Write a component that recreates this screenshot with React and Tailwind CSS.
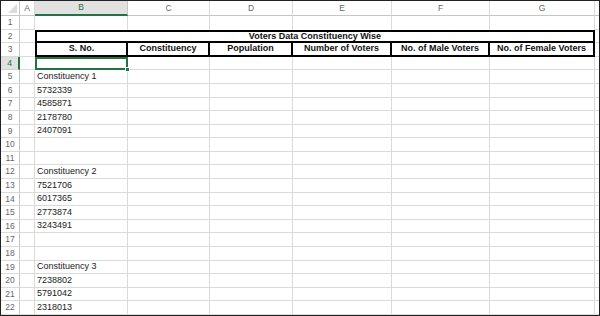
const COLS = ['A', 'B', 'C', 'D', 'E', 'F', 'G']
const HEADERS = ['S. No.', 'Constituency', 'Population', 'Number of Voters', 'No. of Male Voters', 'No. of Female Voters']

const DATA = {
  5: 'Constituency 1',
  6: '5732339',
  7: '4585871',
  8: '2178780',
  9: '2407091',
  12: 'Constituency 2',
  13: '7521706',
  14: '6017365',
  15: '2773874',
  16: '3243491',
  19: 'Constituency 3',
  20: '7238802',
  21: '5791042',
  22: '2318013',
}

const ROWS = Array.from({ length: 22 }, (_, i) => i + 1)

function RowNum({ n }) {
  const active = n === 4
  return (
    <div
      className={`flex items-center justify-center border-b text-[8.5px] ${
        active
          ? 'bg-[#e1e1e1] text-[#217346] border-b-[#d4d4d4] border-r-2 border-r-[#217346]'
          : 'bg-white text-[#666] border-b-[#dadada] border-r border-r-[#c6c6c6]'
      }`}
    >
      {n}
    </div>
  )
}

function Cell({ children, className = '' }) {
  return (
    <div className={`flex items-center overflow-visible whitespace-nowrap px-[2px] ${className}`}>
      {children}
    </div>
  )
}

function SheetRow({ n }) {
  if (n === 2) {
    return (
      <>
        <RowNum n={n} />
        <Cell className="border-b border-b-[#dadada]" />
        <div className="col-span-6 flex items-center justify-center border-2 border-black font-bold text-[9px] text-[#111]">
          Voters Data Constituency Wise
        </div>
        <Cell className="border-b border-b-[#dadada]" />
      </>
    )
  }
  if (n === 3) {
    return (
      <>
        <RowNum n={n} />
        <Cell className="border-b border-b-[#dadada]" />
        {HEADERS.map((h, i) => (
          <div
            key={h}
            className={`flex items-center justify-center whitespace-nowrap border-b-2 border-r-2 border-black font-bold text-[9px] text-[#111] ${
              i === 0 ? 'border-l-2' : ''
            }`}
          >
            {h}
          </div>
        ))}
        <Cell className="border-b border-b-[#dadada]" />
      </>
    )
  }
  return (
    <>
      <RowNum n={n} />
      <Cell className={`border-b border-b-[#dadada] ${n === 4 ? '' : 'border-r border-r-[#dadada]'}`} />
      {n === 4 ? (
        <div className="relative border-2 border-[#217346]">
          <div className="absolute -right-[4px] -bottom-[4px] h-[5px] w-[5px] bg-[#217346] border border-white" />
        </div>
      ) : (
        <Cell className={`border-r border-r-[#dadada] text-[9px] text-[#1a1a1a] ${n === 1 ? '' : 'border-b border-b-[#dadada]'}`}>
          {DATA[n]}
        </Cell>
      )}
      {[0, 1, 2, 3, 4].map(i => (
        <Cell
          key={i}
          className={`border-r border-r-[#dadada] ${n === 1 ? '' : 'border-b border-b-[#dadada]'}`}
        />
      ))}
      <Cell className="border-b border-b-[#dadada]" />
    </>
  )
}

export default function App() {
  return (
    <div
      className="h-[316px] w-[600px] overflow-hidden border border-[#222] bg-white"
      style={{ fontFamily: '"Liberation Sans", Arial, sans-serif' }}
    >
      <div className="grid h-full grid-cols-[19px_15px_93px_82px_83px_99px_98px_105px_1fr] grid-rows-[15px_repeat(22,minmax(0,1fr))]">
        {/* column headers */}
        <div className="relative border-b border-r border-[#c6c6c6] bg-white">
          <svg className="absolute right-[2px] bottom-[2px]" width="9" height="9" viewBox="0 0 9 9">
            <polygon points="9,0 9,9 0,9" fill="#dcdcdc" />
          </svg>
        </div>
        {COLS.map(c => (
          <div
            key={c}
            className={`flex items-center justify-center text-[8.5px] ${
              c === 'B'
                ? 'bg-[#e1e1e1] text-[#217346] border-b-2 border-b-[#217346] border-r border-r-[#c6c6c6]'
                : 'bg-white text-[#666] border-b border-b-[#c6c6c6] border-r border-r-[#dadada]'
            }`}
          >
            {c}
          </div>
        ))}
        <div className="border-b border-[#c6c6c6] bg-white" />

        {ROWS.map(n => (
          <SheetRow key={n} n={n} />
        ))}
      </div>
    </div>
  )
}
